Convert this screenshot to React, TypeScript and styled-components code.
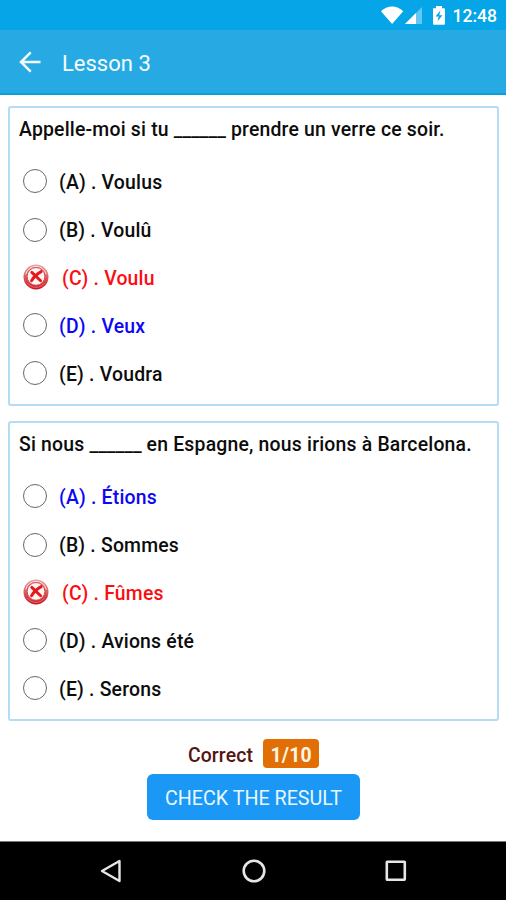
import React from "react";
import styled, { createGlobalStyle } from "styled-components";

const GlobalStyle = createGlobalStyle`
  * { box-sizing: border-box; }
  body { margin: 0; background: #fff; font-family: Roboto, "Liberation Sans", sans-serif; }
`;

const Screen = styled.div`
  width: 506px;
  height: 900px;
  display: flex;
  flex-direction: column;
  background: #fff;
  overflow: hidden;
`;

const StatusBar = styled.div`
  flex: none;
  height: 30px;
  padding-right: 9px;
  display: flex;
  align-items: center;
  justify-content: flex-end;
  background: #06a5e7;
  color: #fff;
`;

const Clock = styled.span`
  padding-top: 2px;
  font-size: 17.5px;
  line-height: 20px;
  font-weight: 500;
`;

const AppBar = styled.header`
  flex: none;
  height: 65px;
  padding: 0 18px;
  display: flex;
  align-items: center;
  background: #27aae3;
  border-bottom: 2px solid #0c9fdd;
  color: #f4fcff;
`;

const Title = styled.h1`
  margin: 4px 0 0 20px;
  font-size: 22px;
  line-height: 28px;
  font-weight: 400;
`;

const Content = styled.main`
  flex: 1;
  padding: 11px 7px 0 8px;
  display: flex;
  flex-direction: column;
  gap: 15px;
`;

const Card = styled.section`
  height: 300px;
  padding: 9px 8px 0 9px;
  border: 2px solid #b5dcf2;
  border-radius: 3px;
`;

const Question = styled.h2`
  margin: 0;
  padding-top: 1px;
  font-size: 19.4px;
  line-height: 24px;
  font-weight: 500;
  letter-spacing: 0.2px;
  color: #0c0c0c;
  white-space: pre;
`;

const Blank = styled.span`
  letter-spacing: 0;
`;

const Choices = styled.div`
  margin: 15px 0 0 -1px;
  display: grid;
  grid-template-rows: 48.5px 48px 47.5px 48px 48.5px;
`;

const tones = { plain: "#0c0c0c", wrong: "#fb0d12", right: "#0c08f2" };
type Tone = keyof typeof tones;

const Choice = styled.label<{ $tone: Tone }>`
  display: flex;
  align-items: center;
  padding-left: 5px;
  gap: ${(p) => (p.$tone === "wrong" ? 13 : 12)}px;
  font-size: 19.4px;
  line-height: 24px;
  font-weight: 500;
  letter-spacing: 0.2px;
  color: ${(p) => tones[p.$tone]};
`;

const Radio = styled.span`
  width: 24px;
  height: 24px;
  border: 1.3px solid #686868;
  border-radius: 50%;
`;

const ChoiceText = styled.span`
  padding-top: 3px;
`;

const Result = styled.footer`
  flex: none;
  height: 102px;
  display: flex;
  flex-direction: column;
  align-items: center;
  gap: 6px;
`;

const Score = styled.div`
  display: flex;
  align-items: center;
  gap: 10px;
  height: 29px;
  padding-left: 1px;
  font-size: 19.4px;
  font-weight: 500;
  letter-spacing: 0.15px;
  color: #541512;
`;

const ScoreLabel = styled.span`
  padding-top: 3px;
`;

const Badge = styled.span`
  width: 56px;
  height: 29px;
  padding-top: 3px;
  display: flex;
  align-items: center;
  justify-content: center;
  border-radius: 4px;
  background: #e26f06;
  color: #fff4e6;
  font-size: 19.4px;
  font-weight: 700;
`;

const CheckButton = styled.button`
  width: 213px;
  height: 46px;
  padding: 3px 0 0 1px;
  border: 0;
  border-radius: 6px;
  background: #1b98f5;
  color: #e9f8ff;
  font: 400 19.7px/24px Roboto, sans-serif;
`;

const NavBar = styled.nav`
  flex: none;
  height: 59px;
  padding-left: 1px;
  display: flex;
  justify-content: center;
  align-items: center;
  gap: 117.5px;
  border-top: 1px solid #777;
  background: #000;
`;

const WrongMark = () => (
  <svg width="26" height="26" viewBox="0 0 26 26">
    <defs>
      <linearGradient id="ring" x1="0" y1="0" x2="0" y2="1">
        <stop offset="0" stopColor="#e9a2a4" />
        <stop offset=".45" stopColor="#dd6468" />
        <stop offset="1" stopColor="#c9141e" />
      </linearGradient>
    </defs>
    <circle cx="13" cy="13" r="12.5" fill="url(#ring)" />
    <path d="M2.8 10.4A10.5 10.5 0 0 1 23.2 10.4" fill="none" stroke="#fbe3e3" strokeWidth="1" />
    <path d="M4.6 19.2A10.5 10.5 0 0 0 21.4 19.2" fill="none" stroke="#ef8d90" strokeWidth=".7" />
    <circle cx="13" cy="12.4" r="8.9" fill="#fff5f4" stroke="#d9484e" strokeWidth="1" />
    <path d="M8.8 8.4L17.6 16.8M18.2 7.6C14.5 9.6 10.8 12.8 8.5 16.8" fill="none" stroke="#e5181b" strokeWidth="2.9" strokeLinecap="round" />
  </svg>
);

const StatusIcons = () => (
  <svg width="72" height="30" viewBox="0 0 72 30" fill="#fff">
    <path d="M0 11.2C6.2 4.8 16 4.8 22.2 11.2L11.1 24Z" />
    <path d="M24 24L41 7V24Z" opacity=".38" />
    <path d="M24 24L35 13V24Z" />
    <path d="M52 8.3H55V6H61V8.3H63Q64 8.3 64 9.3V23.5Q64 24.7 62.8 24.7H53.1Q52 24.7 52 23.5Z" />
    <path d="M59.4 10.5L54.5 16.5H57.7L56.6 21.3L61.5 15.2H58.3Z" fill="#06a5e7" />
  </svg>
);

const BackArrow = () => (
  <svg width="24" height="24" viewBox="0 0 24 24" fill="none" stroke="#f7fdff" strokeWidth="2.5">
    <path d="M12.7 2.3L3 12L12.7 21.7M3 12H22.5" />
  </svg>
);

interface Answer { text: string; tone?: Tone }
interface QuestionData { before: string; after: string; answers: Answer[] }

const questions: QuestionData[] = [
  {
    before: "Appelle-moi si tu ",
    after: " prendre un verre ce soir.",
    answers: [
      { text: "(A) . Voulus" },
      { text: "(B) . Voulû" },
      { text: "(C) . Voulu", tone: "wrong" },
      { text: "(D) . Veux", tone: "right" },
      { text: "(E) . Voudra" },
    ],
  },
  {
    before: "Si nous ",
    after: " en Espagne, nous irions à Barcelona.",
    answers: [
      { text: "(A) . Étions", tone: "right" },
      { text: "(B) . Sommes" },
      { text: "(C) . Fûmes", tone: "wrong" },
      { text: "(D) . Avions été" },
      { text: "(E) . Serons" },
    ],
  },
];

export default function App() {
  return (
    <Screen>
      <GlobalStyle />
      <StatusBar>
        <StatusIcons />
        <Clock>12:48</Clock>
      </StatusBar>
      <AppBar>
        <BackArrow />
        <Title>Lesson 3</Title>
      </AppBar>
      <Content>
        {questions.map((q) => (
          <Card key={q.before}>
            <Question>
              {q.before}
              <Blank>______</Blank>
              {q.after}
            </Question>
            <Choices>
              {q.answers.map(({ text, tone = "plain" }) => (
                <Choice key={text} $tone={tone}>
                  {tone === "wrong" ? <WrongMark /> : <Radio />}
                  <ChoiceText>{text}</ChoiceText>
                </Choice>
              ))}
            </Choices>
          </Card>
        ))}
      </Content>
      <Result>
        <Score>
          <ScoreLabel>Correct</ScoreLabel>
          <Badge>1/10</Badge>
        </Score>
        <CheckButton>CHECK THE RESULT</CheckButton>
      </Result>
      <NavBar>
        <svg width="24" height="26" viewBox="0 0 24 26" fill="none" stroke="#e6e6e6" strokeWidth="2.4">
          <path d="M20.5 3V23L3 13Z" strokeLinejoin="round" />
        </svg>
        <svg width="26" height="26" viewBox="0 0 26 26" fill="none" stroke="#e6e6e6" strokeWidth="2.6">
          <circle cx="13" cy="13" r="10.3" />
        </svg>
        <svg width="24" height="26" viewBox="0 0 24 26" fill="none" stroke="#e6e6e6" strokeWidth="2.6">
          <rect x="2.8" y="3.8" width="18" height="18" rx=".5" />
        </svg>
      </NavBar>
    </Screen>
  );
}
